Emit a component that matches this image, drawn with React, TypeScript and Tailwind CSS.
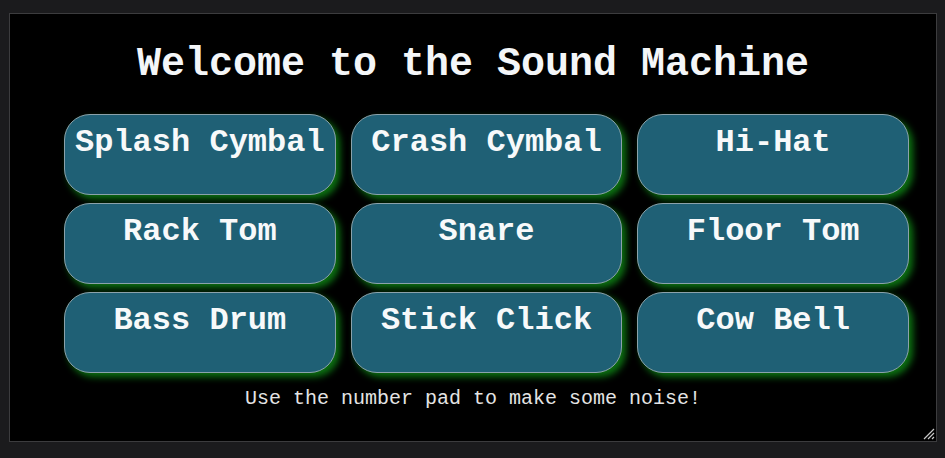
import React from "react";

const pads = [
  "Splash Cymbal",
  "Crash Cymbal",
  "Hi-Hat",
  "Rack Tom",
  "Snare",
  "Floor Tom",
  "Bass Drum",
  "Stick Click",
  "Cow Bell",
];

const mono = { fontFamily: '"Liberation Mono", "Courier New", monospace' };

export default function App() {
  return (
    <div className="w-[945px] h-[458px] bg-[#1b1b1d] pt-[13px] pl-[9px]" style={mono}>
      <div className="relative w-[928px] h-[429px] bg-black border border-[#3c3c3e]">
        <h1 className="text-center text-[40px] font-bold leading-[48px] text-[#f4f6f8] mt-[27px]">
          Welcome to the Sound Machine
        </h1>
        <div className="ml-[54px] mt-[25px] w-[845px] grid grid-cols-3 gap-x-[15px] gap-y-[8px]">
          {pads.map((p) => (
            <button
              key={p}
              className="h-[81px] rounded-[26px] bg-[#1f6075] border border-[#8ba2ab] shadow-[4px_4px_7px_#0c7212] text-[32px] font-bold leading-[36px] text-[#f7f9fa] pt-[10px] flex justify-center items-start"
            >
              {p}
            </button>
          ))}
        </div>
        <p className="text-center text-[20px] leading-[24px] text-[#e4e4e4] mt-[14px]">
          Use the number pad to make some noise!
        </p>
        <svg
          className="absolute right-[1px] bottom-[1px]"
          width="13"
          height="13"
          viewBox="0 0 13 13"
        >
          <path d="M12 2 L2 12 M12 6 L6 12 M12 10 L10 12" stroke="#c8c8c8" strokeWidth="1.2" />
        </svg>
      </div>
    </div>
  );
}
